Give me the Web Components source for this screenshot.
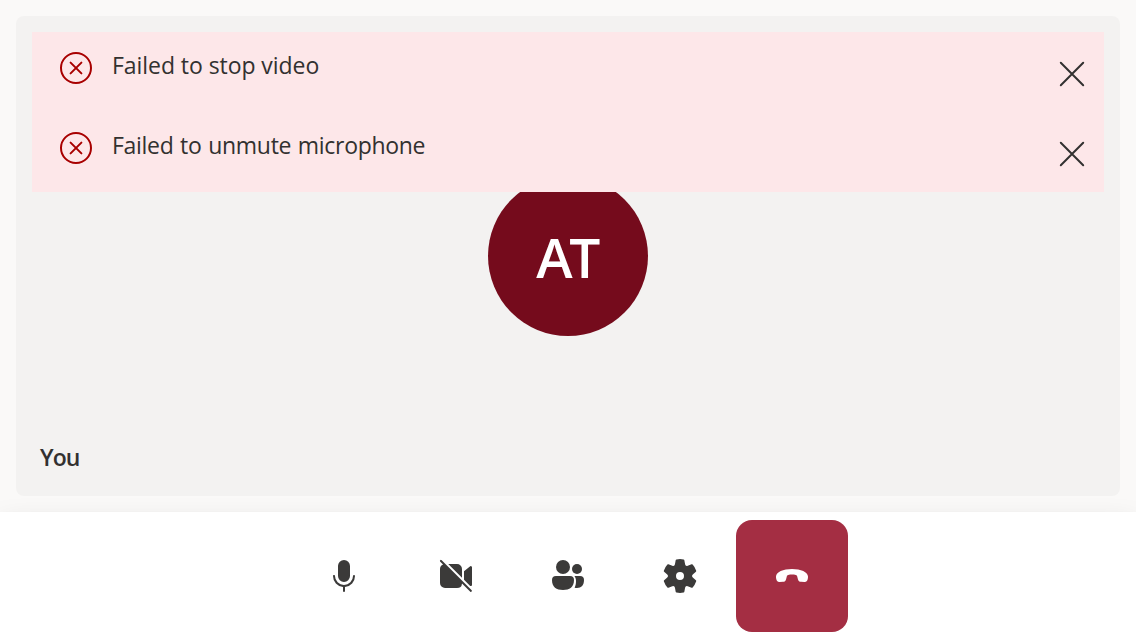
<!DOCTYPE html>
<html lang="en">
<head>
<meta charset="utf-8">
<title>Call</title>
<style>
html,body{margin:0;height:100%;overflow:hidden}
body{font-family:"Open Sans","Noto Sans",sans-serif;color:#323130;background:#faf9f8}
.stop{--track:-.06px}
.unmute{--track:-.3px;word-spacing:1px}
</style>
</head>
<body>
<call-screen>
  <video-tile initials="AT" name="You">
    <error-bar class="stop">Failed to stop video</error-bar>
    <error-bar class="unmute">Failed to unmute microphone</error-bar>
  </video-tile>
  <control-bar slot="controls">
    <control-button icon="mic" label="Microphone"></control-button>
    <control-button icon="video" label="Camera"></control-button>
    <control-button icon="people" label="People"></control-button>
    <control-button icon="gear" label="Settings"></control-button>
    <control-button icon="end" label="Leave" class="leave"></control-button>
  </control-bar>
</call-screen>
<script>
const define = (name, render) => customElements.define(name, class extends HTMLElement {
  constructor() { super(); this.attachShadow({mode: 'open'}); }
  connectedCallback() { this.shadowRoot.innerHTML = render(this); }
});

const ICONS = {
  mic: '<path d="M10 13a3 3 0 0 0 3-3V5a3 3 0 0 0-6 0v5a3 3 0 0 0 3 3ZM5 9.5c.28 0 .5.22.5.5a4.5 4.5 0 1 0 9 0 .5.5 0 0 1 1 0 5.5 5.5 0 0 1-5 5.48v2.02a.5.5 0 0 1-1 0v-2.02A5.5 5.5 0 0 1 4.5 10c0-.28.22-.5.5-.5Z"/>',
  video: '<path d="M2.85 2.15a.5.5 0 1 0-.7.7l1.37 1.37A2.5 2.5 0 0 0 2 6.5v7A2.5 2.5 0 0 0 4.5 16h6a2.5 2.5 0 0 0 2.5-2.3l4.15 4.15a.5.5 0 0 0 .7-.7l-15-15Z"/><path d="M13 6.5v4.38L6.12 4h4.38A2.5 2.5 0 0 1 13 6.5ZM14 11.88l3.1 3.1c.4.1.9-.1.9-.5V5.6a.55.55 0 0 0-.9-.42L14 7.6Z"/>',
  people: '<circle cx="7.5" cy="5.5" r="3.5"/><circle cx="14.5" cy="6.5" r="2.5"/><path d="M4 10h7a2 2 0 0 1 2 2c0 3.6-2.2 5-5.5 5S2 15.6 2 12a2 2 0 0 1 2-2ZM13.2 10H16a2 2 0 0 1 2 2c0 2.6-1.3 4-3.5 4-.45 0-.85-.05-1.2-.15.45-.9.7-2 .7-3.35 0-.95-.3-1.9-.8-2.5Z"/>',
  gear: '<path d="M1.91 7.38A8.5 8.5 0 0 1 3.7 4.3a.5.5 0 0 1 .54-.13l1.92.68a1 1 0 0 0 1.32-.76l.36-2a.5.5 0 0 1 .4-.4 8.53 8.53 0 0 1 3.55 0c.2.04.35.2.38.4l.37 2a1 1 0 0 0 1.32.76l1.92-.68a.5.5 0 0 1 .54.13 8.5 8.5 0 0 1 1.78 3.08c.06.2 0 .4-.15.54l-1.56 1.32a1 1 0 0 0 0 1.52l1.56 1.32a.5.5 0 0 1 .15.54 8.5 8.5 0 0 1-1.78 3.08.5.5 0 0 1-.54.13l-1.92-.68a1 1 0 0 0-1.32.76l-.37 2a.5.5 0 0 1-.38.4 8.53 8.53 0 0 1-3.56 0 .5.5 0 0 1-.39-.4l-.36-2a1 1 0 0 0-1.32-.76l-1.92.68a.5.5 0 0 1-.54-.13 8.5 8.5 0 0 1-1.78-3.08.5.5 0 0 1 .15-.54l1.56-1.32a1 1 0 0 0 0-1.52L2.06 7.92a.5.5 0 0 1-.15-.54ZM8 10a2 2 0 1 0 4 0 2 2 0 0 0-4 0Z"/>',
  end: '<path d="M2 10.3C2 8 5.6 6.5 10 6.5s8 1.5 8 3.8c0 .5 0 1-.2 1.5-.2.9-.8 1.3-1.6 1.2l-1.7-.1c-.8-.1-1.3-.5-1.5-1.2l-.4-1.5c-.1-.4-.3-.6-.7-.7-1.2-.3-2.6-.3-3.8 0-.4.1-.6.3-.7.7L7 11.7c-.2.7-.7 1.1-1.5 1.2l-1.7.1c-.8.1-1.4-.3-1.6-1.2C2 11.3 2 10.8 2 10.3Z"/>',
  error: '<circle cx="10" cy="10" r="7.5"/><path d="M7.3 7.3l5.4 5.4M12.7 7.3l-5.4 5.4"/>',
  close: '<path d="M4.4 4.4l11.2 11.2M15.6 4.4 4.4 15.6"/>'
};

define('ui-icon', el => `<style>
:host{display:block;flex:none;width:40px;height:40px}
svg{display:block;width:100%;height:100%;fill:currentColor}
.line{fill:none;stroke:currentColor;stroke-width:1;stroke-linecap:round}
</style><svg viewBox="0 0 20 20" class="${el.hasAttribute('line') ? 'line' : ''}" aria-hidden="true">${ICONS[el.getAttribute('name')]}</svg>`);

define('error-bar', () => `<style>
:host{display:flex;height:80px;background:#fde7e9;padding:16px 12px 0 24px;box-sizing:border-box}
.err{color:#a80000}
p{margin:-1px 0 0 16px;flex:1;font-size:23px;line-height:36px;letter-spacing:var(--track,0);white-space:nowrap}
button{all:unset;height:40px;margin-top:6px}
</style><ui-icon class="err" name="error" line></ui-icon><p><slot></slot></p><button aria-label="Dismiss"><ui-icon name="close" line></ui-icon></button>`);

define('video-tile', el => `<style>
:host{display:grid;grid-template:100% / 100%;height:480px;background:#f3f2f1;border-radius:8px;overflow:hidden}
.avatar{grid-area:1/1;place-self:center;width:160px;height:160px;border-radius:50%;background:#750b1c;color:#fff;display:grid;place-items:center;font-size:55px;font-weight:600;line-height:72px;letter-spacing:-3.5px}
.avatar span{padding:2px 3px 0 0}
.alerts{grid-area:1/1;align-self:start;padding:16px;z-index:1}
.name{grid-area:1/1;place-self:end start;margin:0 0 21px 24px;font-size:23px;line-height:36px;font-weight:600;letter-spacing:-.9px}
</style><div class="avatar"><span>${el.getAttribute('initials')}</span></div><div class="name">${el.getAttribute('name')}</div><div class="alerts"><slot></slot></div>`);

define('control-button', el => `<style>
:host{display:block;width:112px;height:112px;color:#3b3a39}
:host(.leave){color:#fff;background:#a42e43;border-radius:16px}
button{all:unset;width:100%;height:100%;display:grid;place-items:center}
</style><button aria-label="${el.getAttribute('label')}"><ui-icon name="${el.getAttribute('icon')}"></ui-icon></button>`);

define('control-bar', () => `<style>
:host{display:flex;justify-content:center;height:128px;padding:8px;box-sizing:border-box;background:#fff;box-shadow:0 12.8px 28.8px rgba(0,0,0,.132),0 2.4px 7.2px rgba(0,0,0,.02)}
</style><slot></slot>`);

define('call-screen', () => `<style>
:host{display:flex;flex-direction:column;height:640px}
main{flex:1;padding:16px}
</style><main><slot></slot></main><slot name="controls"></slot>`);
</script>
</body>
</html>
